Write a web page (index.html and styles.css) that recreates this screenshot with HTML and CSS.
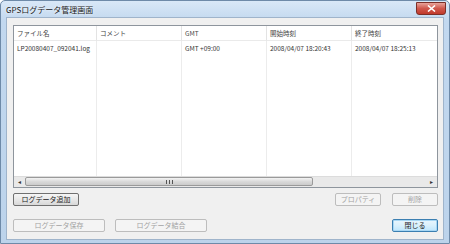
FILE: index.html
```html
<!DOCTYPE html>
<html lang="ja">
<head>
  <meta charset="UTF-8" />
  <title>GPSログデータ管理画面</title>
  <link rel="stylesheet" href="styles.css">
</head>
<body>
  <div class="window">
    <div class="titlebar">
      <span class="title">GPSログデータ管理画面</span>
      <div class="close-btn">
        <svg width="9" height="7" viewBox="0 0 9 7"><path d="M1 0.5 L8 6.5 M8 0.5 L1 6.5" stroke="#fff" stroke-width="1.6"/></svg>
      </div>
    </div>

    <div class="client">
      <!-- log list -->
      <div class="listview">
        <div class="grid">
          <div class="cell head">ファイル名</div>
          <div class="cell head">コメント</div>
          <div class="cell head">GMT</div>
          <div class="cell head">開始時刻</div>
          <div class="cell head">終了時刻</div>

          <div class="cell">LP20080407_092041.log</div>
          <div class="cell"></div>
          <div class="cell">GMT +09:00</div>
          <div class="cell">2008/04/07 18:20:43</div>
          <div class="cell">2008/04/07 18:25:13</div>

          <div class="cell fill"></div>
          <div class="cell fill"></div>
          <div class="cell fill"></div>
          <div class="cell fill"></div>
          <div class="cell fill"></div>
        </div>
        <div class="hscroll">
          <div class="arrow">&#9666;</div>
          <div class="track">
            <div class="thumb"><span class="grip"></span></div>
          </div>
          <div class="arrow">&#9656;</div>
        </div>
      </div>

      <div class="btn-row first">
        <button class="btn wide">ログデータ追加</button>
        <div class="btn-group">
          <button class="btn small" disabled>プロパティ</button>
          <button class="btn small" disabled>削除</button>
        </div>
      </div>

      <div class="btn-row second">
        <div class="btn-group gap10">
          <button class="btn large" disabled>ログデータ保存</button>
          <button class="btn large" disabled>ログデータ結合</button>
        </div>
        <button class="btn small default">閉じる</button>
      </div>
    </div>
  </div>
</body>
</html>
```

FILE: styles.css
```css
body { margin: 0; font-family: "Noto Sans CJK JP", "Noto Sans", sans-serif; }

.window { width: 450px; height: 244px; box-sizing: border-box; display: flex; flex-direction: column; background: linear-gradient(#d9e8f7, #c2d8ef 20px, #bcd3eb); border: 1px solid #6e8aa8; border-radius: 5px 5px 0 0; }
.titlebar { height: 16px; display: flex; justify-content: space-between; align-items: flex-start; padding: 0 3px 0 5px; }
.title { font-size: 8px; line-height: 18px; color: #1a1a1a; text-shadow: 0 0 3px #fff; }
.close-btn { width: 28px; height: 11px; margin-top: 1px; display: flex; justify-content: center; align-items: center; background: linear-gradient(#e8a39a, #d0574c 50%, #c0392b); border: 1px solid #7c2f28; border-radius: 0 0 3px 3px; }

.client { flex: 1; margin: 0 5px 3px 5px; background: #f0f0f0; border: 1px solid #9fb4cb; padding: 7px 5px 7px 6px; display: flex; flex-direction: column; }

.listview { height: 163px; box-sizing: border-box; border: 1px solid #8e959d; background: #fff; display: flex; flex-direction: column; }
.grid { flex: 1; display: grid; grid-template-columns: 83px 85px 85px 85px 1fr; grid-template-rows: 15px 14px 1fr; }
.cell { font-size: 6.5px; line-height: 14px; color: #333; padding-left: 3px; border-right: 1px solid #ececec; white-space: nowrap; overflow: hidden; }
.cell.head { color: #444; border-right-color: #e3e3e3; border-bottom: 1px solid #eaeaea; line-height: 15px; }
.cell:nth-child(5n) { border-right: none; }

.hscroll { height: 10px; display: flex; background: #e9e9e9; border-top: 1px solid #dcdcdc; }
.arrow { width: 11px; font-size: 6px; line-height: 10px; text-align: center; color: #333; }
.track { flex: 1; }
.thumb { width: 288px; height: 9px; display: flex; justify-content: center; align-items: center; box-sizing: border-box; border: 1px solid #9a9a9a; border-radius: 2px; background: linear-gradient(#f3f3f3, #dadada 50%, #cbcbcb); }
.grip { width: 5px; height: 4px; border-left: 1px solid #555; border-right: 1px solid #555; position: relative; }
.grip::after { content: ""; position: absolute; left: 2px; top: 0; width: 1px; height: 4px; background: #555; }

.btn-row { display: flex; justify-content: space-between; }
.btn-row.first { margin-top: 5px; }
.btn-row.second { margin-top: 13px; }
.btn-group { display: flex; gap: 11px; }
.btn-group.gap10 { gap: 10px; }

.btn { height: 13px; padding: 0; font-family: inherit; font-size: 7px; line-height: 11px; color: #222; border: 1px solid #707070; border-radius: 2px; background: linear-gradient(#f6f6f6, #e8e8e8 50%, #d8d8d8); }
.btn:disabled { color: #a3a3a3; border-color: #bdbdbd; background: #f4f4f4; }
.btn.wide { width: 66px; }
.btn.small { width: 46px; }
.btn.large { width: 92px; }
.btn.default { border-color: #3c7fb1; background: linear-gradient(#eaf6fd, #d9f0fc 50%, #bee6fd); box-shadow: inset 0 0 0 1px #a8d7f4; }
```
